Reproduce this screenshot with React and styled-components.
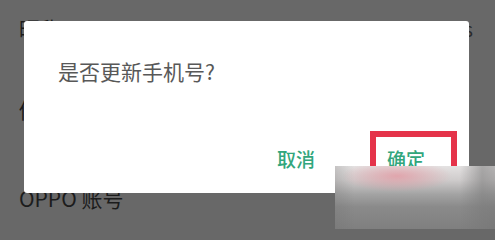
import React from "react";
import styled, { createGlobalStyle } from "styled-components";

const GlobalStyle = createGlobalStyle`
  html, body {
    margin: 0;
    padding: 0;
    background: #686868;
    font-family: "Noto Sans CJK SC", "Noto Sans", sans-serif;
  }
`;

const Screen = styled.div`
  position: relative;
  width: 495px;
  height: 229px;
  overflow: hidden;
  background: #686868;
`;

const List = styled.div`
  display: flex;
  flex-direction: column;
`;

const Row = styled.div`
  display: flex;
  align-items: center;
  justify-content: space-between;
  height: 56px;
  margin-top: ${(p) => p.$gapBefore || 0}px;
  padding: 0 22px 0 19px;
  font-size: 21px;
  line-height: 21px;
  color: #1c1c1c;
`;

const Value = styled.span`
  font-size: 19px;
  color: #2a2a2a;
`;

const Dialog = styled.div`
  position: absolute;
  left: 24px;
  top: 21px;
  width: 445px;
  height: 172px;
  box-sizing: border-box;
  background: #ffffff;
  border-radius: 3px;
  display: flex;
  flex-direction: column;
  padding: 40px 44px 25px 34px;
`;

const Title = styled.div`
  font-size: 21px;
  line-height: 21px;
  color: #585858;
`;

const Footer = styled.div`
  margin-top: auto;
  display: flex;
  justify-content: flex-end;
  gap: 72px;
`;

const Action = styled.span`
  font-size: 19px;
  line-height: 19px;
  font-weight: 500;
  color: #32a67c;
`;

const Highlight = styled.div`
  position: absolute;
  left: 370px;
  top: 131px;
  width: 87px;
  height: 52px;
  box-sizing: border-box;
  border: 6px solid #e5334a;
`;

/* blurred watermark patch in the bottom right corner */
const Watermark = styled.div`
  position: absolute;
  left: 335px;
  top: 166px;
  right: 0;
  bottom: 0;
  backdrop-filter: blur(12px);
  background:
    radial-gradient(ellipse 55px 16px at 62px 10px, rgba(228, 150, 160, 0.75), rgba(228, 150, 160, 0) 100%),
    linear-gradient(90deg, rgba(110, 110, 110, 0.25) 0%, rgba(110, 110, 110, 0) 12%, rgba(110, 110, 110, 0) 78%, rgba(120, 120, 120, 0.55) 92%, rgba(110, 110, 110, 0.4) 100%),
    linear-gradient(180deg, #e4e2e2 0%, #cfcccc 22%, #a3a3a3 45%, #8a8a8a 65%, #7f7f7f 100%);
`;

export default function App() {
  return (
    <>
      <GlobalStyle />
      <Screen>
        <List>
          <Row>
            <span>昵称</span>
            <Value>Jacks</Value>
          </Row>
          <Row $gapBefore={25}>
            <span>修改密码</span>
          </Row>
          <Row $gapBefore={33}>
            <span>OPPO 账号</span>
          </Row>
        </List>
        <Dialog>
          <Title>是否更新手机号?</Title>
          <Footer>
            <Action>取消</Action>
            <Action>确定</Action>
          </Footer>
        </Dialog>
        <Highlight />
        <Watermark />
      </Screen>
    </>
  );
}
